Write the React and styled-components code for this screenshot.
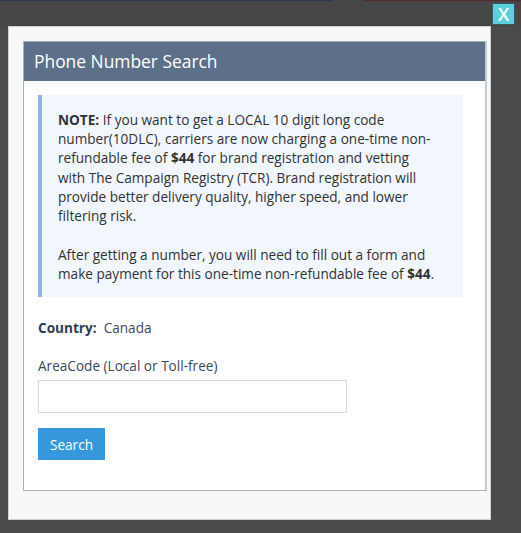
import React from "react";
import styled, { createGlobalStyle } from "styled-components";

const GlobalStyle = createGlobalStyle`
  html, body {
    margin: 0;
    padding: 0;
    background: #4a4a4a;
    font-family: "Open Sans", "Liberation Sans", sans-serif;
  }
  * { box-sizing: border-box; }
`;

const Page = styled.div`
  position: relative;
  width: 521px;
  height: 533px;
  overflow: hidden;
  background: #4a4a4a;
`;

const TopStrip = styled.div`
  display: flex;
  height: 26px;
  background: #464646;
  border-top: 1px solid transparent;
`;

const StripSegment = styled.div`
  width: ${(p) => p.$w}px;
  height: 1px;
  margin-top: -1px;
  background: ${(p) => p.$color};
`;

const Modal = styled.div`
  width: 483px;
  height: 494px;
  margin-left: 8px;
  background: #f8f8f8;
  border: 1px solid #d0d0d0;
  padding: 14px 3px 0 14px;
`;

const Panel = styled.section`
  width: 464px;
  height: 450px;
  background: #ffffff;
  border: 1px solid #a6b2c2;
  border-right: 2px solid #c3ccd8;
  display: flex;
  flex-direction: column;
`;

const PanelHeader = styled.header`
  height: 39px;
  background: #5d7089;
  color: #ffffff;
  font-size: 17.4px;
  line-height: 39px;
  padding-left: 10px;
`;

const PanelBody = styled.div`
  padding: 14px 14px 0 14px;
  display: flex;
  flex-direction: column;
`;

const Note = styled.div`
  width: 425px;
  background: #f2f7fd;
  border-left: 4px solid #8db4e6;
  padding: 15px 25px 14px 16px;
  color: #333333;
  font-size: 13.6px;
  line-height: 19.2px;
`;

const NoteParagraph = styled.p`
  margin: 0 0 ${(p) => (p.$last ? 0 : 19.6)}px 0;
`;

const CountryRow = styled.div`
  margin-top: 21px;
  font-size: 13.6px;
  line-height: 20px;
  color: #3c4a5b;
  display: flex;
  gap: 7px;
`;

const CountryLabel = styled.span`
  font-weight: 700;
  color: #2d3e50;
`;

const FieldLabel = styled.label`
  margin-top: 18px;
  font-size: 13.6px;
  line-height: 20px;
  color: #3c4a5b;
`;

const Input = styled.input`
  margin-top: 4px;
  width: 309px;
  height: 33px;
  border: 1px solid #d6dce5;
  background: #ffffff;
  outline: none;
  font-family: inherit;
  font-size: 14px;
  padding: 0 8px;
`;

const Button = styled.button`
  margin-top: 15px;
  width: 67px;
  height: 32px;
  border: none;
  background: #3498db;
  color: #ffffff;
  font-family: inherit;
  font-size: 13.6px;
  padding: 0;
  cursor: pointer;
`;

const CloseButton = styled.button`
  position: absolute;
  top: 3px;
  left: 492px;
  width: 23px;
  height: 22px;
  border: 1px solid #3d5a5e;
  background: #5bcfdc;
  color: #ffffff;
  font-family: "Open Sans", "Liberation Sans", sans-serif;
  font-weight: 600;
  font-size: 18px;
  line-height: 20px;
  padding: 0;
  text-align: center;
`;

export default function App() {
  return (
    <Page>
      <GlobalStyle />
      <TopStrip>
        <StripSegment $w={333} $color="#2a3a4e" />
        <StripSegment $w={30} $color="transparent" />
        <StripSegment $w={158} $color="#5a2a2a" />
      </TopStrip>
      <Modal>
        <Panel>
          <PanelHeader>Phone Number Search</PanelHeader>
          <PanelBody>
            <Note>
              <NoteParagraph>
                <strong>NOTE:</strong> If you want to get a LOCAL 10 digit long code
                number(10DLC), carriers are now charging a one-time non-refundable fee
                of <strong>$44</strong> for brand registration and vetting with The
                Campaign Registry (TCR). Brand registration will provide better
                delivery quality, higher speed, and lower filtering risk.
              </NoteParagraph>
              <NoteParagraph $last>
                After getting a number, you will need to fill out a form and make
                payment for this one-time non-refundable fee of <strong>$44</strong>.
              </NoteParagraph>
            </Note>
            <CountryRow>
              <CountryLabel>Country:</CountryLabel>
              <span>Canada</span>
            </CountryRow>
            <FieldLabel htmlFor="areacode">AreaCode (Local or Toll-free)</FieldLabel>
            <Input id="areacode" type="text" />
            <Button type="button">Search</Button>
          </PanelBody>
        </Panel>
      </Modal>
      <CloseButton type="button">X</CloseButton>
    </Page>
  );
}
